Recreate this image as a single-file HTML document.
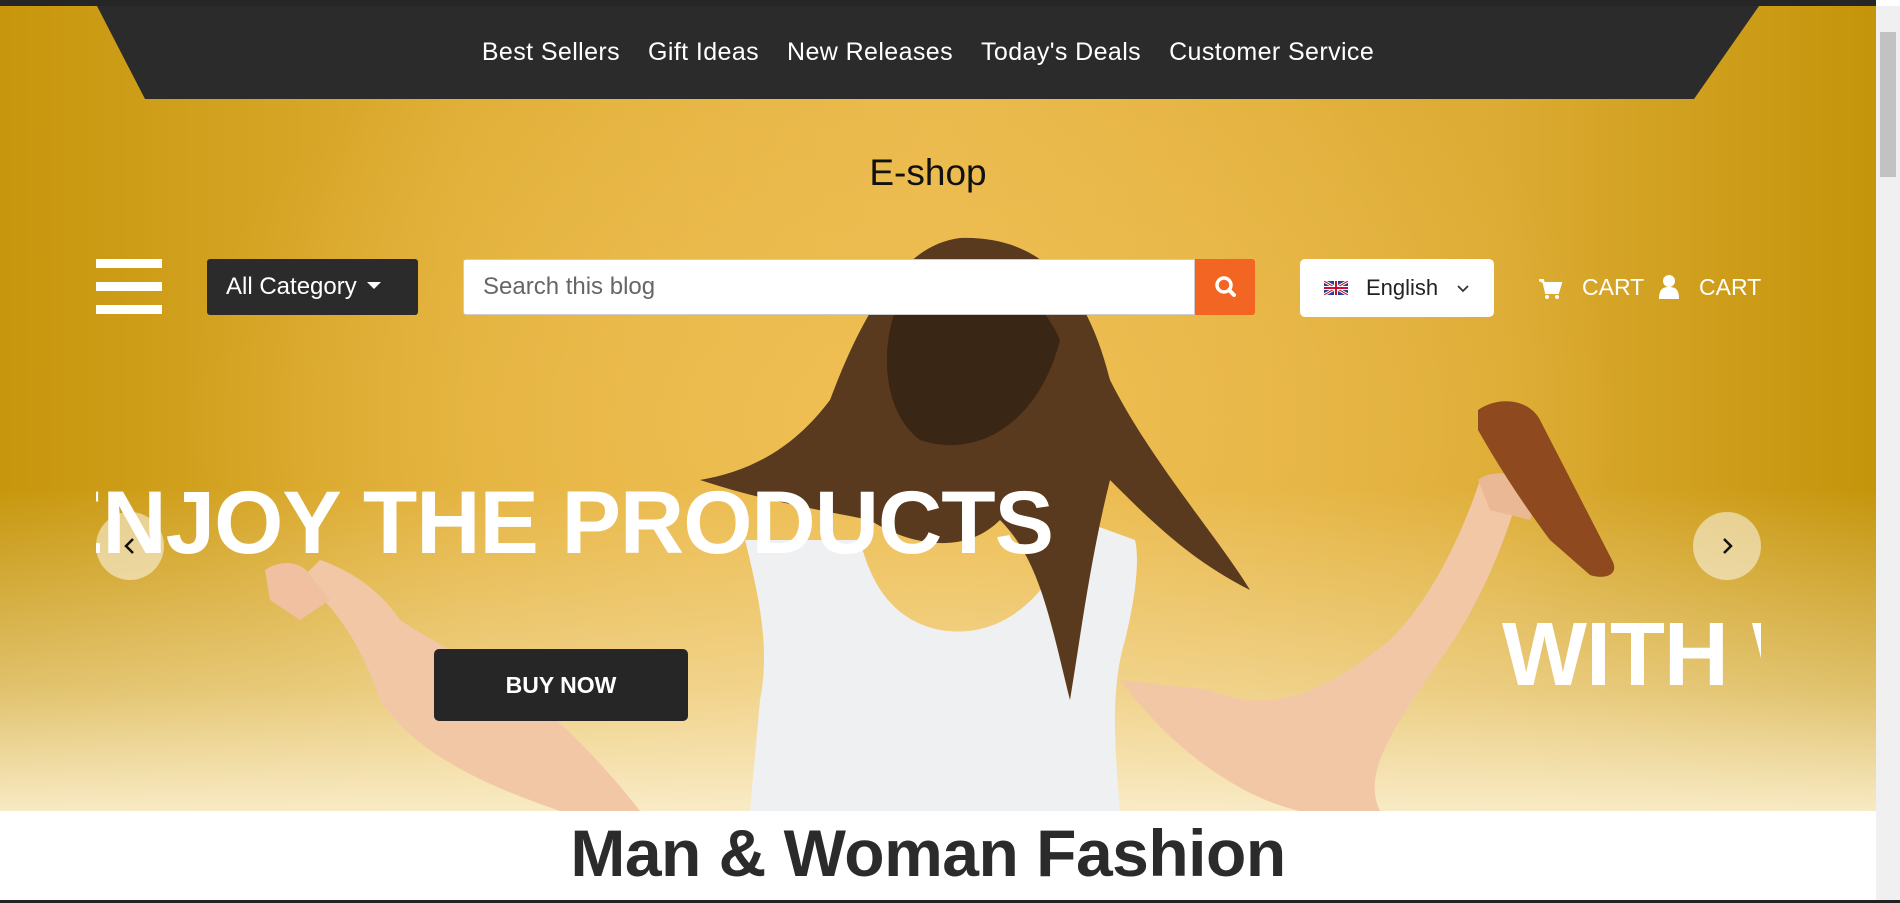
<!DOCTYPE html>
<html><head><meta charset="utf-8"><style>
*{margin:0;padding:0;box-sizing:border-box}
html,body{width:1900px;height:903px;overflow:hidden;background:#fff;font-family:"Liberation Sans",sans-serif}
.page{position:absolute;left:0;top:0;width:1876px;height:903px;overflow:hidden}
.hero{position:absolute;left:0;top:0;width:1876px;height:811px;
background:
linear-gradient(180deg,rgba(255,255,255,0) 0%,rgba(255,255,255,0) 60%,rgba(250,238,205,.5) 85%,rgba(250,238,205,.95) 100%),
radial-gradient(ellipse 900px 600px at 900px 420px,#efbf55 0%,rgba(236,185,74,0) 80%),
linear-gradient(90deg,#c7960c 0%,#dfae35 25%,#e9b84a 50%,#dcab33 80%,#c4940a 100%);}
.topline{position:absolute;left:0;top:0;width:1900px;height:6px;background:#262626}
.nav{position:absolute;left:0;top:0}
.navt{position:absolute;top:38px;left:0;width:1856px;text-align:center;font-size:25px;color:#fff;letter-spacing:.4px}
.navt span{margin:0 14px}
.logo{position:absolute;top:152px;left:0;width:1856px;text-align:center;font-size:37px;color:#111}
.ham{position:absolute;left:96px;top:259px;width:66px;height:56px}
.ham i{position:absolute;left:0;width:66px;height:9px;background:#fff}
.cat{position:absolute;left:207px;top:259px;width:211px;height:56px;background:#2b2b2b;border-radius:3px;color:#fff;font-size:24px;line-height:56px;padding-left:19px}
.cat b{display:inline-block;width:0;height:0;border-left:7px solid transparent;border-right:7px solid transparent;border-top:7px solid #fff;vertical-align:middle;margin-left:10px;margin-top:-4px}
.search{position:absolute;left:463px;top:259px;width:732px;height:56px;background:#fff;border:1px solid #ccc;border-radius:3px 0 0 3px;font-size:24px;color:#666;line-height:54px;padding-left:19px}
.sbtn{position:absolute;left:1195px;top:259px;width:60px;height:56px;background:#f26522;border-radius:0 3px 3px 0}
.lang{position:absolute;left:1300px;top:259px;width:194px;height:58px;background:#fff;border-radius:5px;font-size:22px;color:#222;line-height:58px;padding-left:66px}
.cart{position:absolute;top:274px;font-size:23px;color:#fff}
.head1{position:absolute;left:96px;top:462px;width:1100px;height:120px;overflow:hidden}
.head1 div{position:absolute;left:-52px;top:0;font-size:89px;font-weight:bold;color:#fff;white-space:nowrap;letter-spacing:-1px;line-height:120px}
.head2{position:absolute;left:1500px;top:600px;width:261px;height:110px;overflow:hidden}
.head2 div{position:absolute;left:2px;top:0;font-size:90px;font-weight:bold;color:#fff;white-space:nowrap;line-height:110px;letter-spacing:-1px}
.arrow{position:absolute;width:68px;height:68px;border-radius:50%;background:rgba(255,255,255,.5);top:512px}
.buy{position:absolute;left:434px;top:649px;width:254px;height:72px;background:#262626;border-radius:5px;color:#fff;font-weight:bold;font-size:23px;text-align:center;line-height:72px}
.title{position:absolute;left:0;top:815px;width:1856px;text-align:center;font-size:66px;font-weight:bold;color:#2b2b2b;letter-spacing:-.5px}
.sb{position:absolute;left:1876px;top:6px;width:24px;height:894px;background:#f0f0f0}
.sb i{position:absolute;left:4px;top:26px;width:16px;height:145px;background:#c2c2c2}
.bot{position:absolute;left:0;top:900px;width:1900px;height:3px;background:#222}
</style></head><body>
<div class="page">
<div class="hero">
<svg width="1876" height="811" style="position:absolute;left:0;top:0">
 <path d="M300 580 C330 600 360 640 380 700 C420 760 500 790 560 811 L640 811 C600 760 560 720 520 690 C470 660 430 640 400 620 C380 590 350 570 320 560 Z" fill="#f1c7a6"/>
 <path d="M265 570 C280 560 300 560 310 575 L330 600 L300 620 L270 600 Z" fill="#f0c0a0"/>
 <path d="M1120 680 C1180 760 1250 800 1300 811 L1380 811 C1360 770 1400 720 1440 660 C1470 620 1500 560 1520 490 L1480 480 C1460 540 1430 600 1390 640 C1340 680 1280 720 1210 690 Z" fill="#f1c7a6"/>
 <path d="M1478 480 C1490 470 1520 470 1540 490 L1530 520 L1490 510 Z" fill="#eab894"/>
 <path d="M1478 410 C1500 395 1530 400 1540 420 L1612 560 C1620 575 1605 580 1590 575 L1550 540 C1520 500 1495 460 1478 430 Z" fill="#8e4a1e"/>
 <path d="M745 540 C760 600 770 650 760 700 L750 811 L1120 811 C1115 750 1110 690 1125 640 C1135 600 1140 560 1135 540 L1080 520 C1050 600 1000 640 940 630 C890 620 870 580 860 540 Z" fill="#eef0f2"/>
 <path d="M960 238 C1050 235 1090 300 1110 380 C1150 460 1220 540 1250 590 C1190 560 1150 520 1110 480 C1090 560 1080 640 1070 700 C1050 620 1040 560 1000 520 C960 560 900 540 870 520 C820 510 760 500 700 480 C760 470 800 440 830 400 C860 320 900 245 960 238 Z" fill="#5a3a1e"/>
 <path d="M900 300 C950 260 1030 270 1060 340 C1040 420 980 460 920 440 C880 410 880 340 900 300 Z" fill="#3a2614"/>
</svg>
<div class="topline"></div>
<svg class="nav" width="1876" height="100"><polygon points="97,6 1759,6 1694,99 145,99" fill="#2b2b2b"/></svg>
<div class="navt"><span>Best Sellers</span><span>Gift Ideas</span><span>New Releases</span><span>Today's Deals</span><span>Customer Service</span></div>
<div class="logo">E-shop</div>
<div class="ham"><i style="top:0"></i><i style="top:23px"></i><i style="top:46px"></i></div>
<div class="cat">All Category<b></b></div>
<div class="search">Search this blog</div>
<div class="sbtn"><svg width="60" height="56"><circle cx="29" cy="26" r="7" fill="none" stroke="#fff" stroke-width="3.5"/><line x1="34" y1="31" x2="39" y2="36" stroke="#fff" stroke-width="4" stroke-linecap="round"/></svg></div>
<div class="lang"><svg width="24" height="14" style="position:absolute;left:24px;top:22px"><rect width="24" height="14" fill="#2a3f8f"/><path d="M0 0L24 14M24 0L0 14" stroke="#fff" stroke-width="3"/><path d="M0 0L24 14M24 0L0 14" stroke="#c8102e" stroke-width="1"/><path d="M12 0V14M0 7H24" stroke="#fff" stroke-width="4"/><path d="M12 0V14M0 7H24" stroke="#c8102e" stroke-width="2"/></svg>English<svg width="14" height="10" style="position:absolute;left:156px;top:25px"><path d="M2 2L7 7L12 2" fill="none" stroke="#333" stroke-width="1.8"/></svg></div>
<svg width="24" height="22" style="position:absolute;left:1539px;top:278px"><path d="M0 2H4L7 15H19L22 5H6Z" fill="#fff" stroke="#fff" stroke-width="2"/><circle cx="8" cy="19" r="2" fill="#fff"/><circle cx="18" cy="19" r="2" fill="#fff"/></svg>
<div class="cart" style="left:1582px">CART</div>
<svg width="20" height="24" style="position:absolute;left:1659px;top:275px"><circle cx="10" cy="6" r="6" fill="#fff"/><path d="M0 24C0 14 4 12 10 12C16 12 20 14 20 24Z" fill="#fff"/></svg>
<div class="cart" style="left:1699px">CART</div>
<div class="head1"><div>ENJOY THE PRODUCTS</div></div>
<div class="head2"><div>WITH W</div></div>
<div class="arrow" style="left:96px"><svg width="68" height="68"><path d="M37 27L30 34L37 41" fill="none" stroke="#111" stroke-width="2.5"/></svg></div>
<div class="arrow" style="left:1693px"><svg width="68" height="68"><path d="M31 27L38 34L31 41" fill="none" stroke="#111" stroke-width="2.5"/></svg></div>
<div class="buy">BUY NOW</div>
</div>
<div class="title">Man &amp; Woman Fashion</div>
</div>
<div class="sb"><i></i></div>
<div class="bot"></div>
</body></html>
